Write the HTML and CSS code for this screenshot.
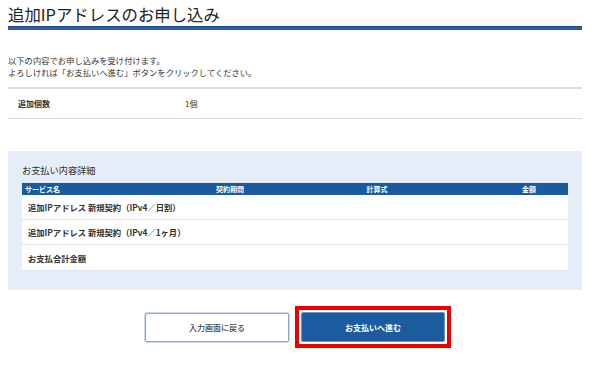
FILE: index.html
```html
<!DOCTYPE html>
<html lang="ja">
<head>
<meta charset="utf-8">
<title>追加IPアドレスのお申し込み</title>
<link rel="stylesheet" href="styles.css">
</head>
<body>
<div class="page">
  <h1 class="title">追加IPアドレスのお申し込み</h1>
  <p class="lead">以下の内容でお申し込みを受け付けます。<br>よろしければ「お支払いへ進む」ボタンをクリックしてください。</p>
  <div class="info-row">
    <div class="info-label">追加個数</div>
    <div class="info-value">1個</div>
  </div>
  <section class="detail">
    <h2 class="detail-title">お支払い内容詳細</h2>
    <div class="table">
      <div class="thead">
        <div class="th th-name">サービス名</div>
        <div class="th">契約期間</div>
        <div class="th">計算式</div>
        <div class="th th-amount">金額</div>
      </div>
      <div class="tr"><div class="td-name">追加IPアドレス 新規契約（IPv4／日割）</div></div>
      <div class="tr"><div class="td-name">追加IPアドレス 新規契約（IPv4／1ヶ月）</div></div>
      <div class="tr tr-last"><div class="td-name">お支払合計金額</div></div>
    </div>
  </section>
  <div class="actions">
    <button class="btn btn-back" type="button">入力画面に戻る</button>
    <div class="highlight">
      <button class="btn btn-next" type="button">お支払いへ進む</button>
    </div>
  </div>
</div>
</body>
</html>
```

FILE: styles.css
```css
* { box-sizing: border-box; }
html, body { margin: 0; padding: 0; background: #fff; }
body {
  font-family: "Noto Sans CJK JP", "Noto Sans", sans-serif;
  color: #333;
}
.page {
  width: 574px;
  margin-left: 8px;
}
.title {
  margin: 0;
  padding: 4px 0 2px;
  font-size: 16.4px;
  line-height: 21px;
  font-weight: 400;
  color: #222;
  border-bottom: 3px solid #2a5e9e;
  box-shadow: inset 0 -1px 0 #1c4a85;
}
.lead {
  margin: 24px 0 0;
  font-size: 8.3px;
  line-height: 12px;
}
.info-row {
  margin-top: 9px;
  display: flex;
  height: 32px;
  align-items: center;
  border-top: 2px solid #d5dee7;
  border-bottom: 1px solid #d5dee7;
  font-size: 8px;
  padding-left: 10px;
}
.info-label {
  width: 167px;
  font-weight: 700;
}
.detail {
  margin-top: 32px;
  background: #e5eef8;
  padding: 12px 14px 19px;
}
.detail-title {
  margin: 0 0 6px;
  font-size: 9.2px;
  line-height: 14px;
  font-weight: 400;
}
.thead {
  display: grid;
  grid-template-columns: 138px 140px 154px 114px;
  height: 12px;
  background: #1a5a9e;
  color: #fff;
  font-size: 7px;
  line-height: 12px;
  font-weight: 700;
}
.th { text-align: center; }
.th-name { text-align: left; padding-left: 3px; }
.th-amount { text-align: right; padding-right: 32px; }
.tr {
  height: 25px;
  background: #fff;
  border-bottom: 1px solid #dde6f0;
  display: flex;
  align-items: center;
  padding-left: 6px;
  font-size: 8.3px;
  font-weight: 700;
}
.tr-last { height: 26px; }
.actions {
  margin-top: 16px;
  display: flex;
  justify-content: center;
  align-items: center;
  gap: 6px;
  padding-left: 6px;
}
.btn {
  width: 144px;
  height: 30px;
  font-family: inherit;
  font-size: 8px;
  border-radius: 2px;
  cursor: pointer;
}
.btn-back {
  height: 29px;
  background: #fff;
  color: #444;
  border: 1px solid #86a9d2;
  box-shadow: 0 0 0 1px #c9daee;
  font-weight: 500;
}
.highlight {
  border: 4px solid #ee0000;
  padding: 2px;
  background: #fff;
}
.btn-next {
  display: block;
  background: #1c5b9e;
  color: #fff;
  border: 1px solid #6b93c4;
  font-weight: 700;
}
```
